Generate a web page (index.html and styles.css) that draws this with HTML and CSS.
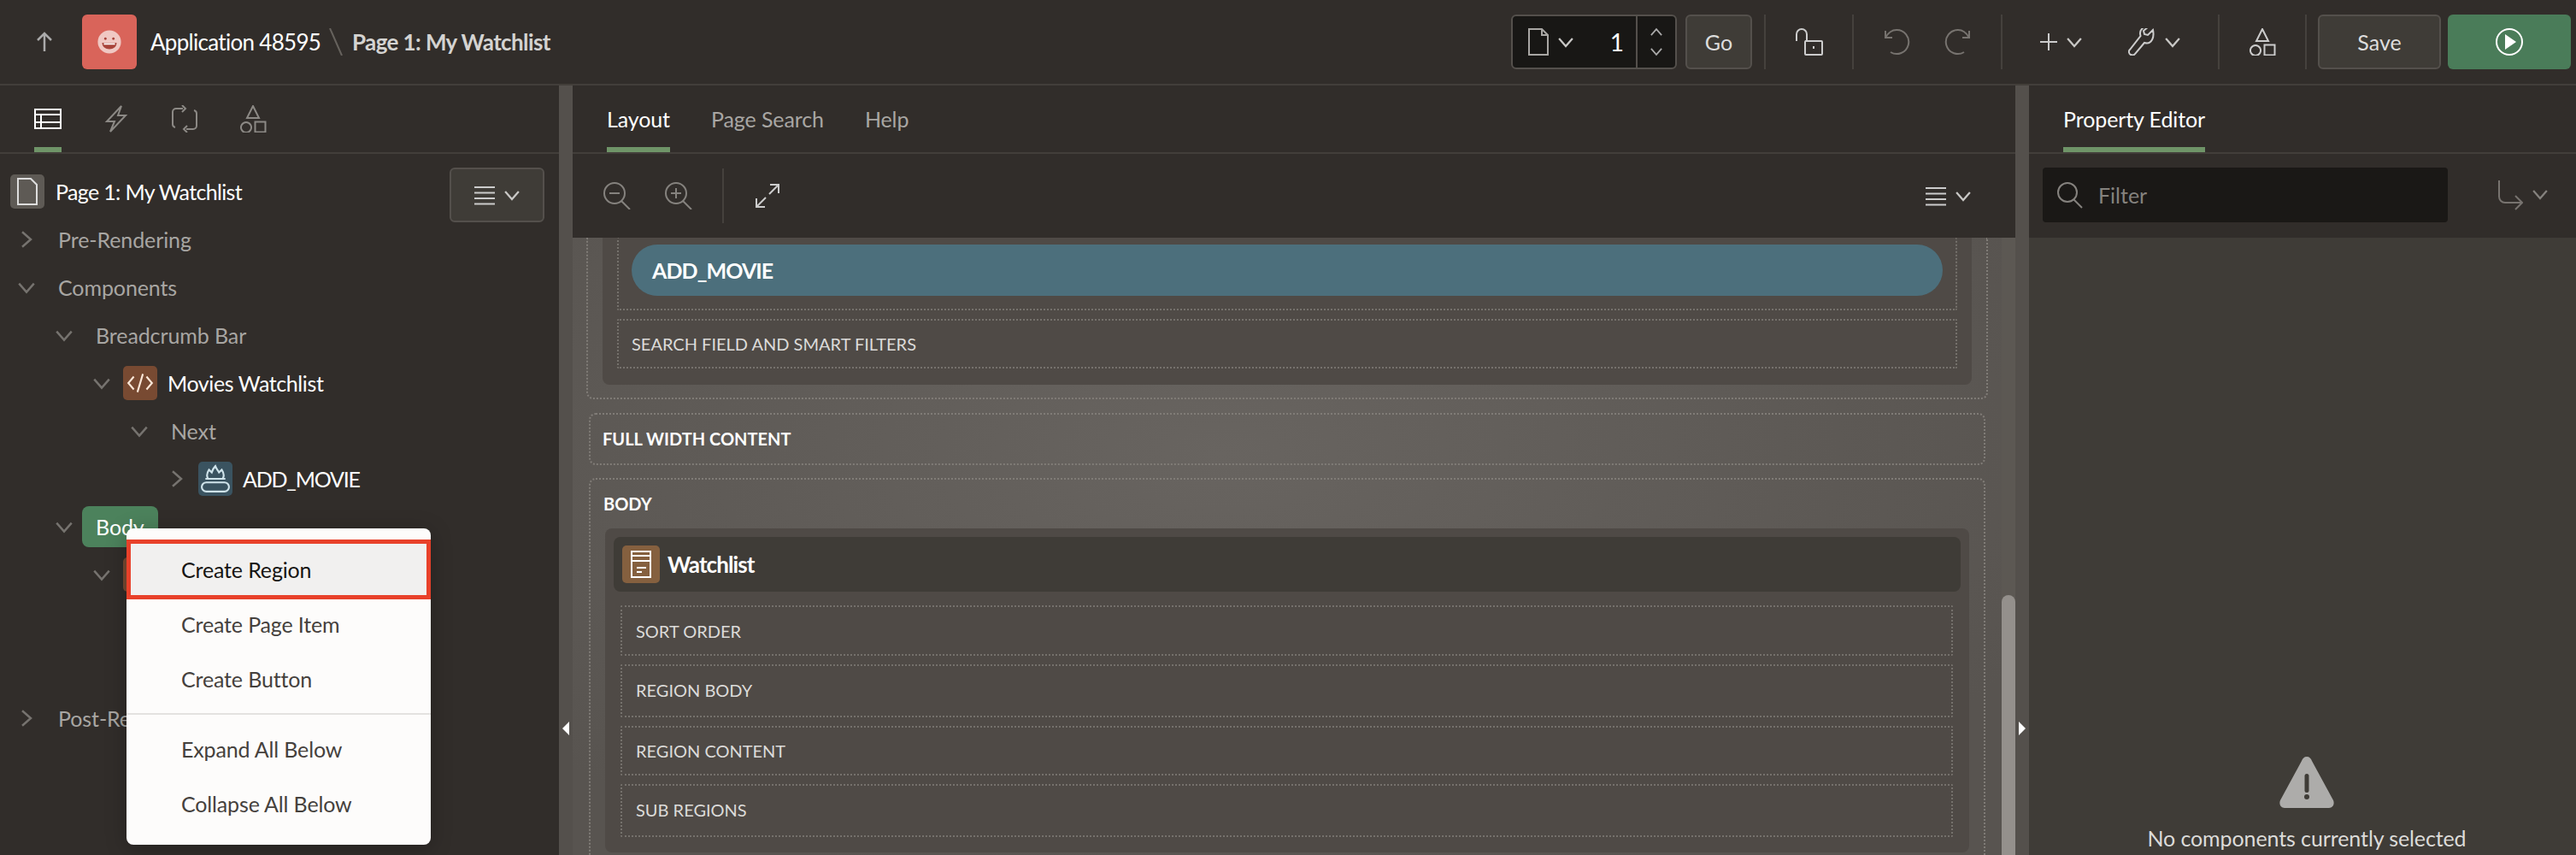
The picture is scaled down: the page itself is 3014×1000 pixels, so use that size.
FILE: index.html
```html
<!DOCTYPE html>
<html lang="en">

<head>
    <meta charset="UTF-8">
    <title>Page Designer</title>
    <link rel="stylesheet" href="styles.css">
</head>

<body>
    <svg class="sprites" width="0" height="0">
        <symbol id="chev-down" viewBox="0 0 16 16"><path d="M1 4.500l7 8 7-8" /></symbol>
        <symbol id="chev-right" viewBox="0 0 16 16"><path d="M4 1l8 7-8 7" /></symbol>
        <symbol id="menu-lines" viewBox="0 0 24 24"><path d="M0 3h24M0 9.500h24M0 16h24M0 22.500h24" /></symbol>
        <symbol id="shapes" viewBox="0 0 32 32"><path d="M16 1l7 14H9zM8 20a6 6 0 1 0 .01 0zM18.500 19.500h12v12h-12z" /></symbol>
        <symbol id="page" viewBox="0 0 24 32"><path d="M1 1h15l7 7v23H1zM16 1v7h7" /></symbol>
        <symbol id="search" viewBox="0 0 32 32"><circle cx="13" cy="13" r="11" /><path d="M20 21l10 10" /></symbol>
    </svg>

    <header class="topbar">
        <svg class="back-icon" viewBox="0 0 24 24"><path d="M12 23V2M4 10l8-8 8 8" /></svg>
        <div class="app-icon">
            <svg viewBox="0 0 32 32" width="30" height="30" stroke="none">
                <circle cx="16" cy="16" r="14.500" fill="#f0c8c3" stroke="none" />
                <circle cx="11" cy="12" r="1.500" fill="#a8433a" stroke="none" />
                <circle cx="21" cy="12" r="1.500" fill="#a8433a" stroke="none" />
                <path d="M7 17h18c0 5-4 8-9 8s-9-3-9-8z" fill="#a8433a" stroke="none" />
                <path d="M9 17.500h14v2H9z" fill="#fff" stroke="none" />
            </svg>
        </div>
        <span class="crumb-app">Application 48595</span>
        <svg class="crumb-slash" viewBox="0 0 16 32"><path d="M1 0l14 32" /></svg>
        <span class="crumb-page">Page 1: My Watchlist</span>

        <div class="toolbar">
            <div class="page-select">
                <svg class="tb-page"><use href="#page" /></svg>
                <svg class="chev-sm"><use href="#chev-down" /></svg>
                <span class="page-num">1</span>
                <div class="spin">
                    <svg class="chev-xs flip"><use href="#chev-down" /></svg>
                    <svg class="chev-xs"><use href="#chev-down" /></svg>
                </div>
            </div>
            <button class="btn btn-go">Go</button>
            <span class="tb-sep tb-sep-first"></span>
            <div class="tb-group tb-lock">
                <svg class="tb-icon" viewBox="0 0 32 32"><path d="M1 15V7a6 6 0 0 1 12 0v8M11 15h19a1 1 0 0 1 1 1v14a1 1 0 0 1-1 1H12a1 1 0 0 1-1-1V16a1 1 0 0 1 1-1zM21 21v3" /></svg>
            </div>
            <span class="tb-sep"></span>
            <div class="tb-group tb-history">
                <span class="tb-cell"><svg class="tb-icon dim" viewBox="0 0 32 32"><path d="M3 3v8h8M3 11C7 4 12 2 16 2a14 14 0 1 1-7 26" /></svg></span>
                <span class="tb-cell"><svg class="tb-icon dim" viewBox="0 0 32 32"><path d="M29 3v8h-8M29 11C25 4 20 2 16 2a14 14 0 1 0 7 26" /></svg></span>
            </div>
            <span class="tb-sep"></span>
            <div class="tb-group tb-create">
                <span class="tb-cell-wide">
                    <svg class="tb-plus" viewBox="0 0 20 20"><path d="M10 0v20M0 10h20" /></svg>
                    <svg class="chev-sm"><use href="#chev-down" /></svg>
                </span>
                <span class="tb-cell-wide">
                    <svg class="tb-icon" viewBox="0 0 32 32"><path d="M29 2l-6 6-4-1-1-4 6-5c-5-1-10 3-10 8 0 1 .2 2 .5 3L2 25c-2 2-1 5 1 6s4 .5 5-1l11-13c1 .3 2 .5 3 .5 5 0 9-6 7-15.500z" /></svg>
                    <svg class="chev-sm"><use href="#chev-down" /></svg>
                </span>
            </div>
            <span class="tb-sep"></span>
            <div class="tb-group tb-shared">
                <svg class="tb-icon"><use href="#shapes" /></svg>
            </div>
            <span class="tb-sep"></span>
            <button class="btn btn-save">Save</button>
            <button class="btn btn-run">
                <svg viewBox="0 0 32 32" width="32" height="32"><circle cx="16" cy="16" r="15" fill="none" stroke="#fff" stroke-width="2" /><path d="M11 7l13 9-13 9z" fill="#fff" stroke="none" /></svg>
            </button>
        </div>
    </header>

    <div class="workspace">
        <section class="panel-left">
            <nav class="tabs">
                <a class="tab tab-icon active">
                    <svg class="tab-svg bright" viewBox="0 0 32 24"><path d="M1 1h30v22H1zM1 7h30M1 16h30M8 7v16" /></svg>
                </a>
                <a class="tab tab-icon">
                    <svg class="tab-svg" viewBox="0 0 32 32"><path d="M22 1L5 19h9l-5 12 18-19h-9z" /></svg>
                </a>
                <a class="tab tab-icon">
                    <svg class="tab-svg" viewBox="0 0 32 32"><path d="M14 4H6a4 4 0 0 0-4 4v14a4 4 0 0 0 3 4M13 0l4 4-4 4M18 28h8a4 4 0 0 0 4-4V10a4 4 0 0 0-3-4M19 32l-4-4 4-4" /></svg>
                </a>
                <a class="tab tab-icon">
                    <svg class="tab-svg"><use href="#shapes" /></svg>
                </a>
            </nav>
            <div class="tree">
                <div class="tree-root">
                    <span class="root-icon"><svg viewBox="0 0 24 32" width="24" height="32"><path d="M1 1h15l7 7v23H1z" fill="#5e5a55" stroke="#ddd" stroke-width="2" /></svg></span>
                    <span class="root-label">Page 1: My Watchlist</span>
                    <button class="btn tree-menu">
                        <svg class="menu-icon"><use href="#menu-lines" /></svg>
                        <svg class="chev-sm"><use href="#chev-down" /></svg>
                    </button>
                </div>
                <div class="tree-row d0"><span class="toggle"><svg><use href="#chev-right" /></svg></span><span class="tree-label">Pre-Rendering</span></div>
                <div class="tree-row d0"><span class="toggle"><svg><use href="#chev-down" /></svg></span><span class="tree-label">Components</span></div>
                <div class="tree-row d1"><span class="toggle"><svg><use href="#chev-down" /></svg></span><span class="tree-label">Breadcrumb Bar</span></div>
                <div class="tree-row d2">
                    <span class="toggle"><svg><use href="#chev-down" /></svg></span>
                    <span class="node-icon icon-code">
                        <svg viewBox="0 0 32 32" width="34" height="34"><path d="M9 9l-6 7 6 7M23 9l6 7-6 7M19 6l-6 20" /></svg>
                    </span>
                    <span class="node-label">Movies Watchlist</span>
                </div>
                <div class="tree-row d3"><span class="toggle"><svg><use href="#chev-down" /></svg></span><span class="tree-label">Next</span></div>
                <div class="tree-row d4">
                    <span class="toggle"><svg><use href="#chev-right" /></svg></span>
                    <span class="node-icon icon-button">
                        <svg viewBox="0 0 32 32" width="34" height="34"><rect x="1" y="20" width="30" height="10" rx="5" /><path d="M5 16h22M8 16c-2-3-1-7 1-10l3 3c1-3 2-5 4-7 1 3 3 5 4 7l3-3c2 3 3 7 1 10" /></svg>
                    </span>
                    <span class="node-label node-caps">ADD_MOVIE</span>
                </div>
                <div class="tree-row d1"><span class="toggle"><svg><use href="#chev-down" /></svg></span><span class="tree-label selected">Body</span></div>
                <div class="tree-row d2"><span class="toggle"><svg><use href="#chev-down" /></svg></span><span class="node-icon icon-code"></span></div>
                <div class="tree-row"></div>
                <div class="tree-row"></div>
                <div class="tree-row d0"><span class="toggle"><svg><use href="#chev-right" /></svg></span><span class="tree-label">Post-Rendering</span></div>
            </div>
        </section>

        <div class="splitter"><span class="arrow-left"></span></div>

        <main class="panel-center">
            <nav class="tabs">
                <a class="tab active">Layout</a>
                <a class="tab">Page Search</a>
                <a class="tab">Help</a>
            </nav>
            <div class="canvas-tools">
                <svg class="tool-icon" viewBox="0 0 32 32"><circle cx="13" cy="13" r="12" /><path d="M7 13h12M21 22l10 10" /></svg>
                <svg class="tool-icon tool-zoom" viewBox="0 0 32 32"><circle cx="13" cy="13" r="12" /><path d="M7 13h12M13 7v12M21 22l10 10" /></svg>
                <span class="tool-sep"></span>
                <svg class="tool-expand" viewBox="0 0 28 28"><path d="M17 1h10v10M27 1L16 12M11 27H1V17M1 27l11-11" /></svg>
                <div class="tool-right">
                    <svg class="menu-icon"><use href="#menu-lines" /></svg>
                    <svg class="chev-sm"><use href="#chev-down" /></svg>
                </div>
            </div>
            <div class="canvas">
                <div class="canvas-scroll">
                    <div class="slot slot-top">
                        <div class="region region-top">
                            <div class="slot-inner slot-buttons">
                                <div class="pill">ADD_MOVIE</div>
                            </div>
                            <div class="slot-inner slot-search">SEARCH FIELD AND SMART FILTERS</div>
                        </div>
                    </div>
                    <div class="slot slot-full">FULL WIDTH CONTENT</div>
                    <div class="slot slot-body">
                        <h3 class="slot-title">BODY</h3>
                        <div class="region region-body">
                            <div class="region-head">
                                <span class="region-icon">
                                    <svg viewBox="0 0 24 32" width="24" height="32"><path d="M1 1h22v30H1zM1 6h22M1 12h22M7 20h11M7 25h6" /></svg>
                                </span>
                                <span class="region-name">Watchlist</span>
                            </div>
                            <div class="slot-inner sub h59">SORT ORDER</div>
                            <div class="slot-inner sub h62">REGION BODY</div>
                            <div class="slot-inner sub h58">REGION CONTENT</div>
                            <div class="slot-inner sub h62">SUB REGIONS</div>
                        </div>
                    </div>
                </div>
                <div class="scrollbar"><span class="thumb"></span></div>
            </div>
        </main>

        <div class="splitter"><span class="arrow-right"></span></div>

        <aside class="panel-right">
            <nav class="tabs">
                <a class="tab active">Property Editor</a>
            </nav>
            <div class="filter-row">
                <div class="filter-box">
                    <svg class="filter-icon"><use href="#search" /></svg>
                    <span>Filter</span>
                </div>
                <svg class="goto-icon" viewBox="0 0 30 36"><path d="M2 1v19a7 7 0 0 0 7 7h20M21 19l8 8-8 8" /></svg>
                <svg class="chev-sm dim-chev"><use href="#chev-down" /></svg>
            </div>
            <div class="empty-state">
                <svg viewBox="0 0 64 60" width="64" height="60"><path d="M32 0c3 0 5 2 6 5l25 46c2 5-1 9-5 9H6c-4 0-7-4-5-9L26 5c1-3 3-5 6-5z" fill="#adacaa" stroke="none" /><rect x="29.500" y="20" width="5" height="22" rx="2.500" fill="#3f3c37" stroke="none" /><circle cx="32" cy="47" r="3" fill="#3f3c37" stroke="none" /></svg>
                <p>No components currently selected</p>
            </div>
        </aside>
    </div>

    <ul class="context-menu">
        <li class="menu-item focus">Create Region</li>
        <li class="menu-item">Create Page Item</li>
        <li class="menu-item">Create Button</li>
        <li class="menu-sep"></li>
        <li class="menu-item">Expand All Below</li>
        <li class="menu-item">Collapse All Below</li>
    </ul>
</body>

</html>
```

FILE: styles.css
```css
* {
    box-sizing: border-box;
}

body {
    margin: 0;
    width: 3014px;
    height: 1000px;
    overflow: hidden;
    position: relative;
    background-color: #312d2a;
    color: #fff;
    font-family: 'Lato', 'Noto Sans', sans-serif;
    font-size: 26px;
}

.sprites {
    position: absolute;
}

svg {
    fill: none;
    stroke: currentColor;
    stroke-width: 2;
    display: block;
    flex-shrink: 0;
}

.btn {
    background-color: #3f3c37;
    border: 2px solid #54504c;
    border-radius: 6px;
    color: #ddd;
    font-family: inherit;
    font-size: 25px;
    height: 64px;
    padding: 0;
}

/* top bar */
.topbar {
    display: flex;
    align-items: center;
    height: 100px;
    border-bottom: 2px solid #423e3a;
}

.back-icon {
    width: 24px;
    height: 24px;
    margin-left: 40px;
    color: #aaa;
    stroke-width: 2.500;
}

.app-icon {
    display: flex;
    align-items: center;
    justify-content: center;
    width: 64px;
    height: 64px;
    margin-left: 32px;
    background-color: #d9645a;
    border-radius: 6px;
}

.crumb-app {
    margin-left: 16px;
    width: 209px;
    white-space: nowrap;
    font-size: 26px;
    letter-spacing: -0.7px;
}

.crumb-slash {
    width: 16px;
    height: 32px;
    color: #66625d;
}

.crumb-page {
    margin-left: 11px;
    font-size: 26px;
    font-weight: 700;
    letter-spacing: -0.6px;
    color: #d4d3d1;
}

.toolbar {
    display: flex;
    align-items: center;
    margin-left: auto;
    padding-right: 6px;
}

.page-select {
    display: flex;
    align-items: center;
    width: 194px;
    height: 64px;
    padding-left: 18px;
    background-color: #181715;
    border: 2px solid #54504c;
    border-radius: 6px;
}

.tb-page {
    width: 24px;
    height: 32px;
    color: #a9a7a4;
}

.chev-sm {
    width: 18px;
    height: 18px;
    margin-left: 11px;
    color: #c9c8c6;
}

.page-num {
    margin-left: auto;
    margin-right: 14px;
    font-size: 28px;
}

.spin {
    display: flex;
    flex-direction: column;
    align-items: center;
    justify-content: space-between;
    width: 46px;
    height: 100%;
    padding: 12px 0;
    border-left: 2px solid #54504c;
}

.chev-xs {
    width: 14px;
    height: 14px;
    color: #aaa;
}

.flip {
    transform: rotate(180deg);
}

.btn-go {
    width: 78px;
    margin-left: 10px;
}

.tb-sep {
    width: 2px;
    height: 64px;
    background-color: #45413d;
}

.tb-sep-first {
    margin-left: 14px;
}

.tb-group {
    display: flex;
    align-items: center;
    justify-content: center;
    color: #ccc;
}

.tb-lock {
    width: 101px;
}

.tb-history {
    width: 172px;
}

.tb-create {
    width: 252px;
    padding-right: 6px;
}

.tb-shared {
    width: 100px;
}

.tb-cell {
    display: flex;
    justify-content: center;
    width: 72px;
}

.tb-cell-wide {
    display: flex;
    align-items: center;
    justify-content: center;
    width: 109px;
}

.tb-icon {
    width: 32px;
    height: 32px;
}

.tb-icon.dim {
    color: #77736f;
}

.tb-plus {
    width: 20px;
    height: 20px;
}

.btn-save {
    width: 144px;
    margin-left: 13px;
}

.btn-run {
    display: flex;
    align-items: center;
    justify-content: center;
    width: 144px;
    margin-left: 8px;
    background-color: #4a7c59;
    border: none;
}

/* panels */
.workspace {
    display: flex;
    height: 900px;
}

.panel-left {
    width: 654px;
}

.splitter {
    display: flex;
    justify-content: center;
    width: 16px;
    padding-top: 744px;
    background-color: #54504c;
}

.arrow-left,
.arrow-right {
    width: 0;
    height: 0;
    border-top: 8px solid transparent;
    border-bottom: 8px solid transparent;
}

.arrow-left {
    border-right: 8px solid #fff;
}

.arrow-right {
    border-left: 8px solid #fff;
}

.panel-center {
    display: flex;
    flex-direction: column;
    width: 1688px;
}

.panel-right {
    display: flex;
    flex-direction: column;
    flex: 1;
}

.tabs {
    display: flex;
    gap: 48px;
    height: 80px;
    padding-left: 40px;
    border-bottom: 2px solid #423e3a;
}

.tab {
    display: flex;
    align-items: center;
    height: 78px;
    padding-top: 6px;
    border-bottom: 6px solid transparent;
    color: #a8a6a3;
    font-size: 25px;
    letter-spacing: -0.1px;
}

.tab.active {
    color: #fff;
    border-bottom-color: #6f9468;
}

.tab-svg {
    width: 32px;
    height: 32px;
    color: #8c8985;
}

.tab-svg.bright {
    height: 24px;
    color: #fff;
}

/* tree */
.tree {
    padding-top: 16px;
}

.tree-root {
    display: flex;
    align-items: center;
    height: 56px;
    padding-left: 12px;
}

.root-icon {
    display: flex;
    align-items: center;
    justify-content: center;
    width: 40px;
    height: 40px;
    background-color: #5e5a55;
    border-radius: 5px;
}

.root-label {
    margin-left: 13px;
    font-size: 25px;
    letter-spacing: -0.65px;
}

.tree-menu {
    display: flex;
    align-items: center;
    justify-content: center;
    align-self: flex-start;
    flex-shrink: 0;
    width: 111px;
    margin-left: auto;
    margin-right: 17px;
}

.menu-icon {
    width: 24px;
    height: 24px;
    color: #ccc;
}

.tree-row {
    display: flex;
    align-items: center;
    height: 56px;
    font-size: 25px;
    letter-spacing: -0.1px;
}

.d0 {
    padding-left: 8px;
}

.d1 {
    padding-left: 52px;
}

.d2 {
    padding-left: 96px;
}

.d3 {
    padding-left: 140px;
}

.d4 {
    padding-left: 184px;
}

.toggle {
    display: flex;
    justify-content: center;
    width: 46px;
    color: #76736f;
}

.toggle svg {
    width: 20px;
    height: 20px;
}

.tree-label {
    margin-left: 14px;
    color: #a8a6a3;
}

.tree-label.selected {
    display: flex;
    align-items: center;
    height: 48px;
    margin-left: -2px;
    padding: 0 16px;
    background-color: #4c825c;
    border-radius: 8px;
    color: #fff;
}

.node-icon {
    display: flex;
    align-items: center;
    justify-content: center;
    width: 40px;
    height: 40px;
    margin-left: 2px;
    border-radius: 5px;
}

.icon-code {
    background-color: #784a32;
    color: #fbe7d8;
}

.icon-button {
    background-color: #3a5360;
    color: #cfe3ea;
}

.node-label {
    margin-left: 12px;
    letter-spacing: -0.4px;
}

.node-label.node-caps {
    letter-spacing: -1.2px;
}

/* center */
.canvas-tools {
    display: flex;
    align-items: center;
    height: 98px;
    padding-left: 36px;
    padding-right: 40px;
}

.tool-icon {
    width: 32px;
    height: 32px;
    color: #85827e;
}

.tool-zoom {
    margin-left: 40px;
}

.tool-sep {
    width: 2px;
    height: 64px;
    margin-left: 35px;
    background-color: #45413d;
}

.tool-expand {
    width: 28px;
    height: 28px;
    margin-left: 37px;
    color: #ccc;
}

.tool-right {
    display: flex;
    align-items: center;
    margin-left: auto;
    padding-right: 12px;
}

.canvas {
    display: flex;
    flex: 1;
    min-height: 0;
    overflow: hidden;
    background: radial-gradient(ellipse at 45% 35%, #686460, #585450 80%);
}

.canvas-scroll {
    width: 1672px;
    padding: 0 19px;
}

.scrollbar {
    width: 16px;
    padding-top: 418px;
    background-color: #5c5853;
}

.thumb {
    display: block;
    height: 400px;
    background-color: #94908c;
    border-radius: 8px 8px 0 0;
}

.slot {
    border: 2px dotted #807c77;
    border-radius: 8px;
    font-size: 20px;
    font-weight: 700;
}

.slot-top {
    height: 189px;
    margin: 0 -3px;
    padding: 0 17px;
    border-top: none;
    border-radius: 0 0 8px 8px;
}

.region {
    background-color: #4f4a46;
    border-radius: 8px;
}

.region-top {
    height: 172px;
    padding: 0 17px;
    border-radius: 0 0 8px 8px;
}

.slot-inner {
    border: 2px dotted #75716c;
    border-radius: 2px;
    font-size: 20px;
    font-weight: 400;
    color: #dcdbd9;
}

.slot-buttons {
    height: 85px;
    padding: 8px 15px 0;
    border-top: none;
}

.pill {
    display: flex;
    align-items: center;
    height: 60px;
    padding-left: 24px;
    background-color: #4c6f7c;
    border-radius: 30px;
    color: #fff;
    font-size: 25px;
    font-weight: 700;
    letter-spacing: -0.9px;
}

.slot-search {
    display: flex;
    align-items: center;
    height: 58px;
    margin-top: 10px;
    padding-left: 15px;
}

.slot-full {
    display: flex;
    align-items: center;
    height: 61px;
    margin-top: 16px;
    padding: 0 0 2px 14px;
}

.slot-body {
    height: 600px;
    margin-top: 15px;
    padding: 0 17px;
}

.slot-title {
    margin: 0 0 0 -2px;
    height: 57px;
    line-height: 57px;
    font-size: 20px;
}

.region-body {
    height: 379px;
    padding: 10px 19px 0 18px;
}

.region-head {
    display: flex;
    align-items: center;
    height: 64px;
    margin: 0 -9px 16px -8px;
    padding-left: 10px;
    background-color: #3f3c37;
    border-radius: 8px;
}

.region-icon {
    display: flex;
    align-items: center;
    justify-content: center;
    width: 44px;
    height: 44px;
    background-color: #85603f;
    border-radius: 5px;
}

.region-name {
    margin-left: 9px;
    font-size: 26px;
    font-weight: 700;
    letter-spacing: -0.9px;
}

.sub {
    display: flex;
    align-items: center;
    margin-bottom: 10px;
    padding-left: 16px;
}

.h59 {
    height: 59px;
}

.h62 {
    height: 62px;
    padding-bottom: 3px;
}

.h58 {
    height: 58px;
}

/* right */
.filter-row {
    display: flex;
    align-items: flex-start;
    height: 98px;
    padding: 16px 0 0 16px;
}

.filter-box {
    display: flex;
    align-items: center;
    width: 474px;
    height: 64px;
    padding-left: 16px;
    background-color: #1a1816;
    border-radius: 4px;
    color: #85827e;
    font-size: 25px;
}

.filter-icon {
    width: 32px;
    height: 32px;
    margin-right: 17px;
}

.goto-icon {
    width: 30px;
    height: 36px;
    margin: 14px 0 0 58px;
    color: #77736f;
}

.dim-chev {
    margin-top: 22px;
    color: #85827e;
}

.empty-state {
    display: flex;
    flex-direction: column;
    align-items: center;
    flex: 1;
    padding: 607px 0 0 10px;
    background-color: #3f3c37;
}

.empty-state p {
    margin: 20px 0 0;
    font-size: 25px;
    letter-spacing: -0.1px;
    color: #dcdbd9;
}

/* context menu */
.context-menu {
    position: absolute;
    left: 148px;
    top: 618px;
    width: 356px;
    height: 370px;
    margin: 0;
    padding: 16px 0;
    list-style: none;
    background-color: #fdfcfb;
    border-radius: 8px;
    box-shadow: 0 4px 24px rgba(0, 0, 0, 0.25);
    color: #45413d;
    font-size: 25px;
    letter-spacing: -0.15px;
}

.menu-item {
    display: flex;
    align-items: center;
    height: 64px;
    padding-left: 64px;
}

.menu-item.focus {
    height: 70px;
    margin: -3px 0;
    padding-left: 59px;
    background-color: #f1f0ef;
    border: 5px solid #e8412a;
    color: #161513;
}

.menu-sep {
    height: 2px;
    margin: 8px 0;
    background-color: #e4e2e0;
}
```
